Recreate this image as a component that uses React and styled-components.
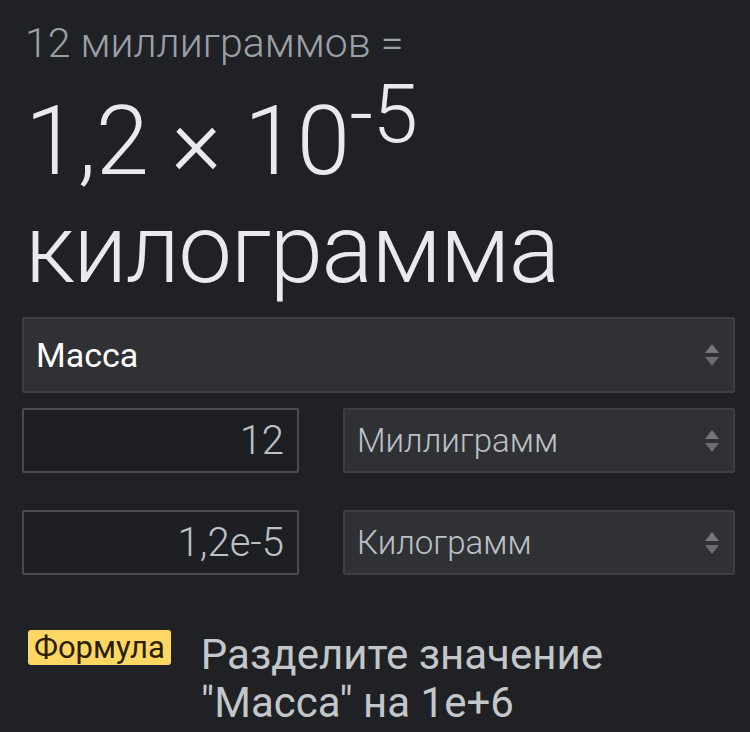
import React from "react";
import styled, { createGlobalStyle } from "styled-components";

const GlobalStyle = createGlobalStyle`
  html, body {
    margin: 0;
    padding: 0;
    background: #202124;
  }
  body {
    font-family: Roboto, "Noto Sans", Arial, sans-serif;
    color: #e8eaed;
    overflow: hidden;
  }
`;

const Page = styled.div`
  width: 750px;
  height: 732px;
  box-sizing: border-box;
  padding: 0 15px 0 22px;
  background: #202124;
`;

const Equation = styled.div`
  padding-left: 3px;
  padding-top: 14px;
`;

const Source = styled.div`
  font-size: 41px;
  font-weight: 300;
  color: #9aa0a6;
  line-height: 58px;
`;

const Result = styled.div`
  font-size: 96px;
  font-weight: 300;
  color: #e8eaed;
  line-height: 118px;
  letter-spacing: -0.5px;
  margin-top: 10px;
`;

const Sup = styled.sup`
  font-size: 82px;
  vertical-align: baseline;
  position: relative;
  top: -32px;
  line-height: 0;
`;

const Unit = styled.div`
  font-size: 96px;
  font-weight: 300;
  color: #e8eaed;
  line-height: 110px;
  letter-spacing: -1.5px;
  margin-top: -6px;
`;

const Form = styled.div`
  margin-top: 13px;
  display: flex;
  flex-direction: column;
`;

const SelectBox = styled.div`
  display: flex;
  align-items: center;
  justify-content: space-between;
  box-sizing: border-box;
  height: ${(p) => p.$h}px;
  background: #303134;
  border: 2px solid #3c4043;
  border-radius: 2px;
  padding: 0 13px 0 12px;
  font-size: ${(p) => p.$fs}px;
  font-weight: ${(p) => p.$fw};
  color: ${(p) => p.$color};
`;

const Row = styled.div`
  display: grid;
  grid-template-columns: 277px 1fr;
  column-gap: 44px;
  margin-top: ${(p) => p.$mt}px;
`;

const NumberInput = styled.div`
  box-sizing: border-box;
  height: 65px;
  border: 2px solid #4a4c50;
  border-radius: 2px;
  background: #1e1f22;
  display: flex;
  align-items: center;
  justify-content: flex-end;
  padding-right: 13px;
  font-size: 40px;
  font-weight: 300;
  color: #bdc1c6;
`;

const Formula = styled.div`
  display: flex;
  align-items: flex-start;
  margin-top: 55px;
  padding-left: 6px;
`;

const Badge = styled.span`
  background: #fdd663;
  color: #2a2000;
  font-size: 31px;
  line-height: 35px;
  padding: 0 6px;
  border-radius: 3px;
  flex-shrink: 0;
`;

const FormulaText = styled.div`
  margin-left: 30px;
  font-size: 42px;
  line-height: 48px;
  color: #c4c7ca;
  margin-top: 1px;
`;

function Arrows() {
  return (
    <svg width="16" height="24" viewBox="0 0 16 24">
      <path d="M8 1 L15 10 L1 10 Z" fill="#74777b" />
      <path d="M8 23 L15 14 L1 14 Z" fill="#6a6d71" />
    </svg>
  );
}

function Select({ label, h, fs, fw, color }) {
  return (
    <SelectBox $h={h} $fs={fs} $fw={fw} $color={color}>
      <span>{label}</span>
      <Arrows />
    </SelectBox>
  );
}

export default function App() {
  return (
    <Page>
      <GlobalStyle />
      <Equation>
        <Source>12 миллиграммов =</Source>
        <Result>
          1,2 × 10<Sup>-5</Sup>
        </Result>
        <Unit>килограмма</Unit>
      </Equation>
      <Form>
        <Select label="Масса" h={76} fs={34} fw={400} color="#ffffff" />
        <Row $mt={15}>
          <NumberInput>12</NumberInput>
          <Select label="Миллиграмм" h={65} fs={33} fw={300} color="#bdc1c6" />
        </Row>
        <Row $mt={37}>
          <NumberInput>1,2e-5</NumberInput>
          <Select label="Килограмм" h={65} fs={33} fw={300} color="#bdc1c6" />
        </Row>
      </Form>
      <Formula>
        <Badge>Формула</Badge>
        <FormulaText>
          Разделите значение
          <br />
          "Масса" на 1e+6
        </FormulaText>
      </Formula>
    </Page>
  );
}
